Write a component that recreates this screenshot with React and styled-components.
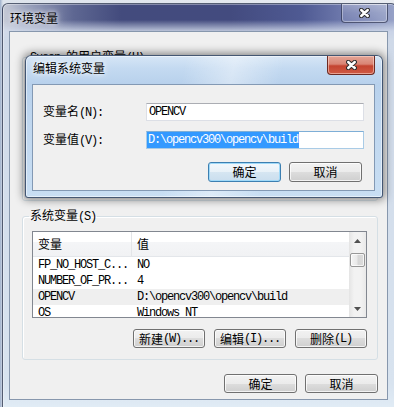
import styled, { createGlobalStyle, css } from "styled-components";

const CJK = `"Noto Sans CJK SC", "Liberation Sans", sans-serif`;
const MONO = `"Liberation Mono", "DejaVu Sans Mono", monospace`;

const GlobalStyle = createGlobalStyle`
  html, body {
    margin: 0;
    padding: 0;
  }
  body {
    overflow: hidden;
    font-family: ${CJK};
    font-size: 12px;
    color: #000;
  }
  * {
    box-sizing: border-box;
  }
`;

const systemRows = [
  ["FP_NO_HOST_C...", "NO"],
  ["NUMBER_OF_PR...", "4"],
  ["OPENCV", "D:\\opencv300\\opencv\\build", true],
  ["OS", "Windows_NT"],
];

const CloseGlyph = () => (
  <svg width="11" height="10" viewBox="0 0 11 10">
    <path
      d="M2.2 2L8.8 8M8.8 2L2.2 8"
      stroke="#2e2e2e"
      strokeWidth="4.4"
      strokeLinecap="round"
      fill="none"
    />
    <path
      d="M2.2 2L8.8 8M8.8 2L2.2 8"
      stroke="#fff"
      strokeWidth="2.4"
      strokeLinecap="round"
      fill="none"
    />
  </svg>
);

const Arrow = ({ down }) => (
  <svg width="7" height="4" viewBox="0 0 7 4">
    <polygon points={down ? "0,0 7,0 3.5,4" : "3.5,0 7,4 0,4"} fill="#505050" />
  </svg>
);

const VarList = ({ rows, header = true }) => (
  <List>
    <ListBody>
      {header && (
        <HeaderRow>
          <HeaderCell $first>变量</HeaderCell>
          <HeaderCell>值</HeaderCell>
        </HeaderRow>
      )}
      {rows.map(([name, value, selected]) => (
        <Row key={name} $selected={selected}>
          <Cell>{name}</Cell>
          <Cell>{value}</Cell>
        </Row>
      ))}
    </ListBody>
    <ScrollBar>
      <ScrollArrow>
        <Arrow />
      </ScrollArrow>
      <Thumb />
      <ScrollArrow $bottom>
        <Arrow down />
      </ScrollArrow>
    </ScrollBar>
  </List>
);

const App = () => {
  return (
    <Desktop>
      <GlobalStyle />
      <Window>
        <TitleBar>
          <WindowTitle>环境变量</WindowTitle>
          <CloseButton>
            <CloseGlyph />
          </CloseButton>
        </TitleBar>
        <Client>
          {/* user variables: hidden under the edit dialog */}
          <Group $mt={17} $pb={41}>
            <Legend>
              <Mono>Susan </Mono>的用户变量<Mono>(U)</Mono>
            </Legend>
            <VarList rows={[]} header={false} />
          </Group>
          <Group $mt={7}>
            <Legend>
              系统变量<Mono>(S)</Mono>
            </Legend>
            <VarList rows={systemRows} />
            <ButtonRow>
              <Button>
                新建<Mono>(W)...</Mono>
              </Button>
              <Button>
                编辑<Mono>(I)...</Mono>
              </Button>
              <Button>
                删除<Mono>(L)</Mono>
              </Button>
            </ButtonRow>
          </Group>
          <Footer>
            <Button $w={73}>确定</Button>
            <Button $w={73}>取消</Button>
          </Footer>
        </Client>
      </Window>

      <Dialog>
        <DialogTitleBar>
          <DialogTitle>编辑系统变量</DialogTitle>
          <CloseButton $active>
            <CloseGlyph />
          </CloseButton>
        </DialogTitleBar>
        <DialogClient>
          <Form>
            <FieldLabel>
              变量名<Mono>(N):</Mono>
            </FieldLabel>
            <TextBox>OPENCV</TextBox>
            <FieldLabel>
              变量值<Mono>(V):</Mono>
            </FieldLabel>
            <TextBox $focused>
              <Selection>D:\opencv300\opencv\build</Selection>
            </TextBox>
          </Form>
          <DialogButtons>
            <Button $w={73} $h={20} $default>
              确定
            </Button>
            <Button $w={73} $h={20}>
              取消
            </Button>
          </DialogButtons>
        </DialogClient>
      </Dialog>
    </Desktop>
  );
};

const Desktop = styled.div`
  position: relative;
  width: 394px;
  height: 407px;
  overflow: hidden;
  padding: 3px 0 0 2px;
  background: linear-gradient(90deg, #9fb0cb 0, #dde3ec 3px, #e9ecf1 100%);
`;

const Window = styled.div`
  width: 395px;
  height: 420px;
  display: flex;
  flex-direction: column;
  padding: 0 8px 0 6px;
  border: 1px solid rgba(38, 46, 70, 0.75);
  border-radius: 6px 6px 0 0;
  background: linear-gradient(
      180deg,
      rgba(214, 223, 238, 0) 0,
      rgba(214, 223, 238, 0) 16px,
      rgba(214, 223, 238, 0.8) 27px,
      #cfd9e8 36px,
      #d8e3ef 380px,
      #e6f1f9 100%
    ),
    linear-gradient(
      90deg,
      #c6cad6 0,
      #9aa2bd 6%,
      #5e6792 18%,
      #434b7d 30%,
      #434b7f 58%,
      #4f5a93 76%,
      #7883b4 90%,
      #98a3c8 100%
    );
  box-shadow: inset 0 0 0 1px rgba(255, 255, 255, 0.35);
`;

const TitleBar = styled.div`
  height: 27px;
  flex-shrink: 0;
  display: flex;
  justify-content: space-between;
  align-items: flex-start;
`;

const WindowTitle = styled.span`
  margin: 7px 0 0 1px;
  font-size: 12px;
  line-height: 14px;
  text-shadow: 0 0 4px #fff, 0 0 8px rgba(255, 255, 255, 0.9);
`;

const CloseButton = styled.div`
  width: ${(p) => (p.$active ? 48 : 47)}px;
  height: 19px;
  display: flex;
  align-items: center;
  justify-content: center;
  border: 1px solid rgba(40, 48, 78, 0.7);
  border-top: none;
  border-radius: 0 0 4px 4px;
  background: linear-gradient(
    180deg,
    rgba(255, 255, 255, 0.28) 0,
    rgba(255, 255, 255, 0.12) 50%,
    rgba(255, 255, 255, 0.05) 100%
  );
  box-shadow: inset 0 0 0 1px rgba(255, 255, 255, 0.35);

  ${(p) =>
    p.$active &&
    css`
      border-color: #6d2a22;
      background: linear-gradient(
        180deg,
        #e3a596 0,
        #d98474 45%,
        #c44430 55%,
        #cf5a44 100%
      );
      box-shadow: inset 0 0 0 1px rgba(255, 220, 210, 0.55);
    `}
`;

const Client = styled.div`
  height: 369px;
  flex-shrink: 0;
  display: flex;
  flex-direction: column;
  padding: 0 9px 0 12px;
  border: 1px solid #8797ad;
  background: #f0f0f0;
`;

const Group = styled.fieldset`
  margin: ${(p) => p.$mt}px 0 0;
  padding: 7px 10px ${(p) => p.$pb || 11}px 9px;
  min-width: 0;
  border: 1px solid #d5dfe5;
  border-radius: 3px;
  box-shadow: inset 1px 1px 0 #fff;
`;

const Legend = styled.legend`
  margin-left: -3px;
  padding: 0 1px;
  font-size: 12px;
  line-height: 14px;
`;

const Mono = styled.span`
  font-family: ${MONO};
  font-size: 12px;
  letter-spacing: -1.2px;
`;

const List = styled.div`
  height: 87px;
  display: flex;
  overflow: hidden;
  border: 1px solid #828790;
  background: #fff;
`;

const ListBody = styled.div`
  flex: 1;
  min-width: 0;
  overflow: hidden;
`;

const HeaderRow = styled.div`
  height: 25px;
  display: grid;
  grid-template-columns: 99px 1fr;
  border-bottom: 1px solid #e3e6ea;
  background: linear-gradient(
    180deg,
    #ffffff 0,
    #ffffff 42%,
    #f4f5f7 42%,
    #f1f2f4 100%
  );
`;

const HeaderCell = styled.div`
  padding-left: 5px;
  font-size: 12px;
  line-height: 24px;
  border-right: ${(p) => (p.$first ? "1px solid #e3e5e8" : "none")};
`;

const Row = styled.div`
  height: 16px;
  display: grid;
  grid-template-columns: 99px 1fr;
  background: ${(p) => (p.$selected ? "#efefef" : "#fff")};
`;

const Cell = styled.div`
  padding-left: 5px;
  font-family: ${MONO};
  font-size: 12px;
  line-height: 16px;
  letter-spacing: -1.2px;
  white-space: nowrap;
  overflow: hidden;
`;

const ScrollBar = styled.div`
  width: 17px;
  flex-shrink: 0;
  display: flex;
  flex-direction: column;
  background: linear-gradient(90deg, #e4e4e4 0, #f2f2f2 30%, #f2f2f2 70%, #e9e9e9 100%);
`;

const ScrollArrow = styled.div`
  height: 17px;
  display: flex;
  align-items: center;
  justify-content: center;
  margin-top: ${(p) => (p.$bottom ? "auto" : "0")};
`;

const Thumb = styled.div`
  height: 14px;
  margin: 4px 1px 0;
  border: 1px solid #979797;
  border-radius: 2px;
  background: linear-gradient(90deg, #f4f4f4 0, #e9e9e9 45%, #d6d6d6 55%, #dcdcdc 100%);
  box-shadow: inset 0 0 0 1px rgba(255, 255, 255, 0.7);
`;

const ButtonRow = styled.div`
  display: flex;
  justify-content: flex-end;
  gap: 9px;
  margin-top: 11px;
`;

const Footer = styled.div`
  display: flex;
  justify-content: flex-end;
  gap: 8px;
  margin-top: 14px;
`;

const Button = styled.button`
  width: ${(p) => p.$w || 72}px;
  height: ${(p) => p.$h || 19}px;
  padding: 0;
  display: flex;
  align-items: center;
  justify-content: center;
  border: 1px solid #707070;
  border-radius: 3px;
  background: linear-gradient(
    180deg,
    #f2f2f2 0,
    #ebebeb 50%,
    #dddddd 50%,
    #cfcfcf 100%
  );
  box-shadow: inset 0 0 0 1px rgba(255, 255, 255, 0.75);
  font-family: ${CJK};
  font-size: 12px;
  line-height: 14px;
  color: #000;

  ${(p) =>
    p.$default &&
    css`
      border-color: #3c7fb1;
      background: linear-gradient(
        180deg,
        #f3f8fc 0,
        #e8f1f8 50%,
        #d6e6f2 50%,
        #cadeee 100%
      );
      box-shadow: inset 0 0 0 1px #9fd9f8;
    `}
`;

const Dialog = styled.div`
  position: absolute;
  left: 25px;
  top: 55px;
  width: 358px;
  height: 143px;
  display: flex;
  flex-direction: column;
  padding: 0 7px 6px 6px;
  border: 1px solid rgba(34, 52, 82, 0.8);
  border-radius: 6px 6px 3px 3px;
  background: linear-gradient(
      100deg,
      rgba(255, 255, 255, 0) 42%,
      rgba(255, 255, 255, 0.4) 55%,
      rgba(255, 255, 255, 0) 68%
    ),
    linear-gradient(
      180deg,
      #d6e6f6 0,
      #c4daf1 12px,
      #b8d1ec 28px,
      #c0d7ef 70px,
      #c8def3 100%
    );
  box-shadow: 0 0 9px 2px rgba(0, 0, 0, 0.45),
    inset 0 0 0 1px rgba(255, 255, 255, 0.5);
`;

const DialogTitleBar = styled.div`
  height: 28px;
  flex-shrink: 0;
  display: flex;
  justify-content: space-between;
  align-items: flex-start;
`;

const DialogTitle = styled.span`
  margin: 5px 0 0 1px;
  font-size: 12px;
  line-height: 14px;
  text-shadow: 0 0 4px #fff, 0 0 8px rgba(255, 255, 255, 0.9);
`;

const DialogClient = styled.div`
  flex: 1;
  padding: 18px 10px 0 10px;
  border: 1px solid #8399b4;
  background: #f0f0f0;
`;

const Form = styled.div`
  display: grid;
  grid-template-columns: 103px 1fr;
  row-gap: 10px;
  align-items: center;
`;

const FieldLabel = styled.label`
  font-size: 12px;
  line-height: 14px;
`;

const TextBox = styled.div`
  height: 18px;
  display: flex;
  align-items: center;
  padding-left: 2px;
  overflow: hidden;
  white-space: nowrap;
  border: 1px solid #dcdfe6;
  border-top-color: #abadb3;
  background: #fff;
  font-family: ${MONO};
  font-size: 12px;
  letter-spacing: -1.2px;

  ${(p) =>
    p.$focused &&
    css`
      padding-left: 0;
      border-color: #a9cbe6;
      border-top-color: #7eaed6;
    `}
`;

const Selection = styled.span`
  padding: 0 1px;
  line-height: 16px;
  background: #3399ff;
  color: #fff;
`;

const DialogButtons = styled.div`
  display: flex;
  justify-content: flex-end;
  gap: 8px;
  margin: 13px 2px 0 0;
`;

export default App;
